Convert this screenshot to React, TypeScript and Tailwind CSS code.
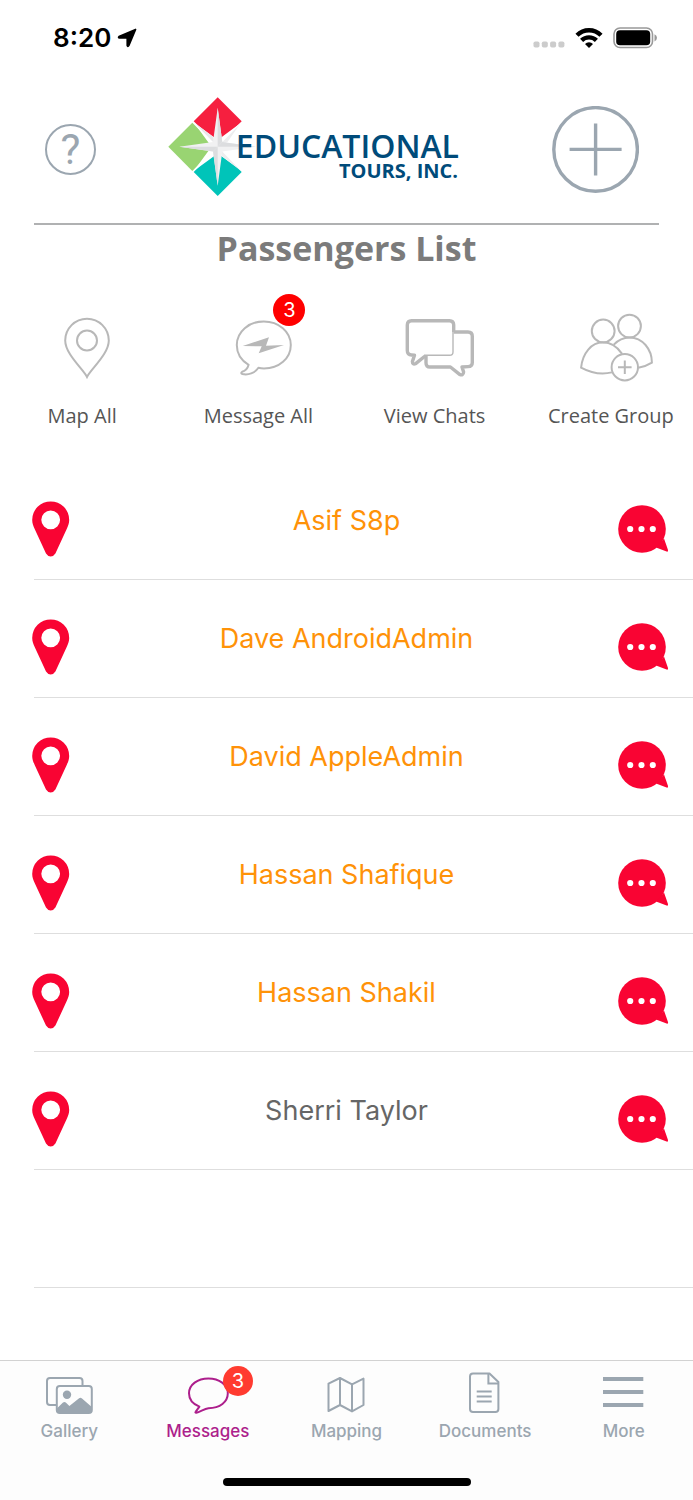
import type { ReactNode } from "react";

interface Passenger {
  name: string;
  highlighted: boolean;
}

const passengers: Passenger[] = [
  { name: "Asif S8p", highlighted: true },
  { name: "Dave AndroidAdmin", highlighted: true },
  { name: "David AppleAdmin", highlighted: true },
  { name: "Hassan Shafique", highlighted: true },
  { name: "Hassan Shakil", highlighted: true },
  { name: "Sherri Taylor", highlighted: false },
];

function StatusBar() {
  return (
    <div className="flex h-[76px] items-center justify-between pl-[53px] pr-9">
      <div className="flex items-center gap-1.5">
        <span className="text-[26px] leading-8 font-semibold text-black">8:20</span>
        <svg width="20" height="20" viewBox="0 0 20 20">
          <path
            d="M18.6 1.4 L2 8.5 Q0.8 9.6 2.6 10 H9.4 Q10.2 10 10.2 10.8 V17.4 Q10.8 19.2 11.8 17.6 Z"
            fill="#000"
            stroke="#000"
            strokeWidth="1.6"
            strokeLinejoin="round"
          />
        </svg>
      </div>
      <div className="flex items-center">
        <svg width="32" height="20" viewBox="0 0 32 20" className="mr-2.5">
          <rect x="0.5" y="13.5" width="6" height="6" rx="1.8" fill="#ccc" />
          <rect x="8.8" y="13.5" width="6" height="6" rx="1.8" fill="#ccc" />
          <rect x="17.1" y="13.5" width="6" height="6" rx="1.8" fill="#ccc" />
          <rect x="25.4" y="13.5" width="6" height="6" rx="1.8" fill="#ccc" />
        </svg>
        <svg width="28" height="20" viewBox="0 0 28 20" className="mr-2.5" fill="none" stroke="#000" strokeWidth="4.4">
          <path d="M2 7.2 A17 17 0 0 1 26 7.2" />
          <path d="M6.6 12.4 A10.6 10.6 0 0 1 21.4 12.4" />
          <path d="M14 20 L10 16 A5.6 5.6 0 0 1 18 16 Z" fill="#000" stroke="none" />
        </svg>
        <svg width="44" height="22" viewBox="0 0 44 22">
          <rect x="1" y="1" width="38.5" height="19.5" rx="6" fill="none" stroke="#999" strokeWidth="1.6" />
          <rect x="3.2" y="3.3" width="34" height="15" rx="3.8" fill="#000" />
          <path d="M41.5 7.2 Q44 8.5 44 10.8 Q44 13 41.5 14.4 Z" fill="#999" />
        </svg>
      </div>
    </div>
  );
}

function Logo() {
  return (
    <svg width="292" height="100" viewBox="0 0 292 100" className="font-['Open_Sans',sans-serif]">
      <path d="M49.7 0.3 L73.7 24.3 L49.7 48.3 L25.7 24.3 Z" fill="#f61f3f" />
      <path d="M24.3 25.7 L48.3 49.8 L24.3 74 L0.3 49.8 Z" fill="#99d472" />
      <path d="M49.7 51 L73.7 74.9 L49.7 99 L25.7 74.9 Z" fill="#00c4b9" />
      <path
        d="M25.7 25.2 L49.7 43 L73.7 25.2 L56 49.7 L73.7 74 L49.7 56.5 L25.7 74 L43.5 49.7 Z"
        fill="#fff"
      />
      <path d="M44.7 39.5 L25.7 25.2 L49.7 49.7 Z" fill="#e9e9ea" />
      <path d="M39.7 59.7 L25.7 74 L49.7 49.7 Z" fill="#e9e9ea" />
      <path d="M59.7 44.7 L72 27 L49.7 49.7 Z" fill="#ededee" />
      <path d="M54.7 59.7 L72 73 L49.7 49.7 Z" fill="#ededee" />
      <path d="M49.7 10.7 L54.3 45 L88 49.7 L54.3 54.4 L49.7 88.7 L45 54.4 L11.3 49.7 L45 45 Z" fill="#f1f1f2" />
      <path d="M49.7 10.7 L54.3 45 L49.7 49.7 Z" fill="#dcdddf" />
      <path d="M11.3 49.7 L45 54.4 L49.7 49.7 Z" fill="#dcdddf" />
      <path d="M49.7 88.7 L45 54.4 L49.7 49.7 Z" fill="#dcdddf" />
      <path d="M88 49.7 L54.3 45 L49.7 49.7 Z" fill="#dcdddf" />
      <text textAnchor="end" fill="#004b7a">
        <tspan x="291" y="61" fontSize="32" fontWeight="600">
          EDUCATIONAL
        </tspan>
        <tspan x="290" y="81" fontSize="20" fontWeight="700">
          TOURS, INC.
        </tspan>
      </text>
    </svg>
  );
}

function Header() {
  return (
    <header className="mx-[34px] flex h-[149px] items-center border-b-2 border-[#b0b1b2] pl-[11px] pr-5">
      <button
        aria-label="Help"
        className="flex size-[51px] items-center justify-center rounded-full border-2 border-[#9ba6b0] font-[Roboto,sans-serif] text-[42px] leading-none text-[#9ba6b0]"
      >
        ?
      </button>
      <div className="flex flex-1 justify-center pr-5 pb-1.5">
        <Logo />
      </div>
      <button aria-label="Add" className="text-[#9ba6b0]">
        <svg width="88" height="88" viewBox="0 0 88 88" fill="none" stroke="currentColor" strokeWidth="3.4">
          <circle cx="44.6" cy="43.4" r="41.8" />
          <path d="M44.6 17.4 V69.4 M18.6 43.4 H70.6" />
        </svg>
      </button>
    </header>
  );
}

function Action({ label, badge, children }: { label: string; badge?: number; children: ReactNode }) {
  return (
    <button className="flex flex-col items-center gap-[17px]">
      <span className="relative ml-2.5 text-[#b8b8b8]">
        <svg width="76" height="72" viewBox="0 0 76 72" fill="none" stroke="currentColor" strokeWidth="2">
          {children}
        </svg>
        {badge && (
          <span className="absolute -top-[19px] left-12 flex size-8 items-center justify-center rounded-full bg-[#ff0000] text-xl text-white">
            {badge}
          </span>
        )}
      </span>
      <span className="font-['Open_Sans',sans-serif] text-xl leading-7 text-[#555]">{label}</span>
    </button>
  );
}

function Actions() {
  return (
    <nav className="-mx-1.5 grid grid-cols-4 pt-[42px] pb-8">
      <Action label="Map All">
        <path d="M38 64 C34 56 16.2 41 16.2 27.5 A21.8 21.8 0 0 1 59.8 27.5 C59.8 41 42 56 38 64 Z" />
        <circle cx="38" cy="27.5" r="10" />
      </Action>
      <Action label="Message All" badge={3}>
        <path
          d="M23.6 51.8 C15.5 47 11.8 40 11.8 32 C11.8 18.5 24 8.4 38.8 8.4 S65.8 18.5 65.8 32 C65.8 45.5 54 55.4 39 55.4 Q36 55.4 33.4 54.8 C30 60 23 62.5 17.4 61 Q15.2 60.2 17.2 58.8 C21.5 57.5 22.8 55 23.6 51.8 Z"
          strokeLinejoin="round"
        />
        <path d="M17.7 33 L44 24.3 L41 32.7 L59 32 L33.7 40.3 L36.7 33.3 Z" fill="currentColor" stroke="none" />
      </Action>
      <Action label="View Chats">
        <g strokeWidth="3.4" strokeLinejoin="round">
          <path d="M51.7 19 V12 Q51.7 7.7 47.4 7.7 H9.6 Q5.3 7.7 5.3 12 V37.6 Q5.3 41.9 9.6 42 L12.5 42.3 L10.4 48.6 Q10.4 52.2 14 50.4 L22.8 43.2" />
          <path d="M51.7 19 H66 Q70.3 19 70.3 23.3 V49.4 Q70.3 53.4 66 53.6 L60 54 L61.6 59 Q61.4 63 57.6 61.4 L48.4 54 H28 Q24 54 24 49.7 V43" />
        </g>
        <path d="M51 18 V39 Q51 42.3 47.6 42.3 H22" strokeWidth="1.4" />
      </Action>
      <Action label="Create Group">
        <circle cx="25.2" cy="18" r="11.4" />
        <circle cx="51.5" cy="13.1" r="11.4" />
        <path d="M33.9 59.4 Q18.5 63 3.1 54.6 C4.5 40.3 13.5 29.3 24.9 29.3 Q36 29.3 44.1 40.8" />
        <path d="M35.8 31.6 Q42.5 24.4 51.5 24.4 C64.5 24.4 73.9 36.2 73.9 49.6 Q67.5 53.6 60.3 54.8" />
        <circle cx="46.8" cy="54.2" r="13.2" />
        <path d="M46.8 47.4 V61 M40 54.2 H53.6" />
      </Action>
    </nav>
  );
}

function PassengerRow({ name, highlighted }: Passenger) {
  return (
    <li>
      <div className="grid h-[117px] grid-cols-[1fr_auto_1fr] items-center px-6">
        <button aria-label={`Locate ${name}`} className="justify-self-start px-2 pt-4">
          <svg width="38" height="56" viewBox="0 0 38 56" fill="#f90433">
            <path
              fillRule="evenodd"
              d="M18.7 0.4 A18.5 18.5 0 0 1 37.2 18.9 C37.2 22.2 36 25.2 34.6 28.2 L23.4 52.6 Q21.8 55.4 18.7 55.4 T14 52.6 L2.8 28.2 C1.4 25.2 0.2 22.2 0.2 18.9 A18.5 18.5 0 0 1 18.7 0.4 Z M18.7 9.4 A9.4 9.4 0 1 0 18.7 28.2 A9.4 9.4 0 1 0 18.7 9.4 Z"
            />
          </svg>
        </button>
        <span className={`text-[27px] leading-9 ${highlighted ? "text-[#ff9208]" : "text-[#666]"}`}>{name}</span>
        <button aria-label={`Chat with ${name}`} className="justify-self-end pt-4">
          <svg width="51" height="48" viewBox="0 0 51 48" fill="#f90433">
            <circle cx="24" cy="24" r="23.8" />
            <path d="M46 33.5 L50 45 Q50.4 47 48.6 46.6 L38 42.6 Z" />
            <g fill="#fff">
              <circle cx="12.2" cy="24" r="3.1" />
              <circle cx="23.5" cy="24" r="3.1" />
              <circle cx="34.8" cy="24" r="3.1" />
            </g>
          </svg>
        </button>
      </div>
      <div className="ml-[34px] border-b border-[#dedede]" />
    </li>
  );
}

interface TabProps {
  label: string;
  active?: boolean;
  badge?: number;
  children: ReactNode;
}

function Tab({ label, active, badge, children }: TabProps) {
  return (
    <a
      href={`#${label.toLowerCase()}`}
      className={`flex flex-col items-center gap-[3px] pt-[9px] ${active ? "text-[#ad1f8c]" : "text-[#9ba6b0]"}`}
    >
      <span className="relative">
        <svg width="48" height="46" viewBox="0 0 48 46" fill="none" stroke="currentColor" strokeWidth="2">
          {children}
        </svg>
        {badge && (
          <span className="absolute -top-1 left-[39px] flex size-[30px] items-center justify-center rounded-full bg-[#ff3b30] text-xl text-white">
            {badge}
          </span>
        )}
      </span>
      <span className="text-[17px] leading-6 font-medium">{label}</span>
    </a>
  );
}

function TabBar() {
  return (
    <footer className="mt-auto border-t border-[#d2d2d2] bg-[#fdfdfd]">
      <nav className="grid grid-cols-5">
        <Tab label="Gallery">
          <path d="M11.5 35 H5 Q2 35 2 32 V11 Q2 8 5 8 H34.5 Q37.5 8 37.5 11 V15.5" />
          <rect x="11.8" y="16" width="35" height="27" rx="3" />
          <circle cx="22" cy="24.8" r="4.2" fill="currentColor" stroke="none" />
          <path
            d="M11.8 38.4 L18 32.6 Q19.4 31.6 20.8 32.6 L24.4 36 L33.8 28.4 Q35.4 27.2 37 28.4 L46.8 37 V40 Q46.8 43 43.8 43 H14.8 Q11.8 43 11.8 40 Z"
            fill="currentColor"
            stroke="none"
          />
        </Tab>
        <Tab label="Messages" active badge={3}>
          <path
            d="M15.4 36.6 C8.6 34 5 29 5 23.3 C5 14.8 13.6 8.4 24.4 8.4 S43.8 14.8 43.8 23.3 C43.8 32 36 38.2 24.4 38.2 C20.6 38.6 16.5 41.6 12.2 42.8 Q10.8 42.8 11.8 41.6 Z"
            strokeLinejoin="round"
          />
        </Tab>
        <Tab label="Mapping">
          <path
            d="M6.5 13.6 L18 8 L30 14.4 L41.5 8.6 V35 L30 41.4 L18 35 L6.5 41 Z M18 8 V35 M30 14.4 V41.4"
            strokeLinejoin="round"
          />
        </Tab>
        <Tab label="Documents">
          <path d="M28.5 3.6 H12 Q9 3.6 9 6.6 V39 Q9 42 12 42 H34.4 Q37.4 42 37.4 39 V12 Z" strokeLinejoin="round" />
          <path d="M27.4 3.6 V13.4 H37.4 M15.7 21.4 H30.7 M15.7 26.4 H30.7 M15.7 31.4 H30.7" />
        </Tab>
        <Tab label="More">
          <path d="M3 9 H43.3 M3 22 H43.3 M3 35 H43.3" strokeWidth="4" />
        </Tab>
      </nav>
      <div className="mx-auto mt-[35px] mb-3.5 h-2 w-[248px] rounded-full bg-black" />
    </footer>
  );
}

export default function App() {
  return (
    <div className="flex min-h-screen flex-col overflow-hidden bg-white font-[Inter,sans-serif]">
      <StatusBar />
      <Header />
      <h1 className="text-center font-['Open_Sans',sans-serif] text-[34px] leading-[46px] font-bold text-[#7b7b7b]">
        Passengers List
      </h1>
      <Actions />
      <ul>
        {passengers.map((passenger) => (
          <PassengerRow key={passenger.name} {...passenger} />
        ))}
      </ul>
      <div className="ml-[34px] h-[118px] border-b border-[#dedede]" />
      <TabBar />
    </div>
  );
}
